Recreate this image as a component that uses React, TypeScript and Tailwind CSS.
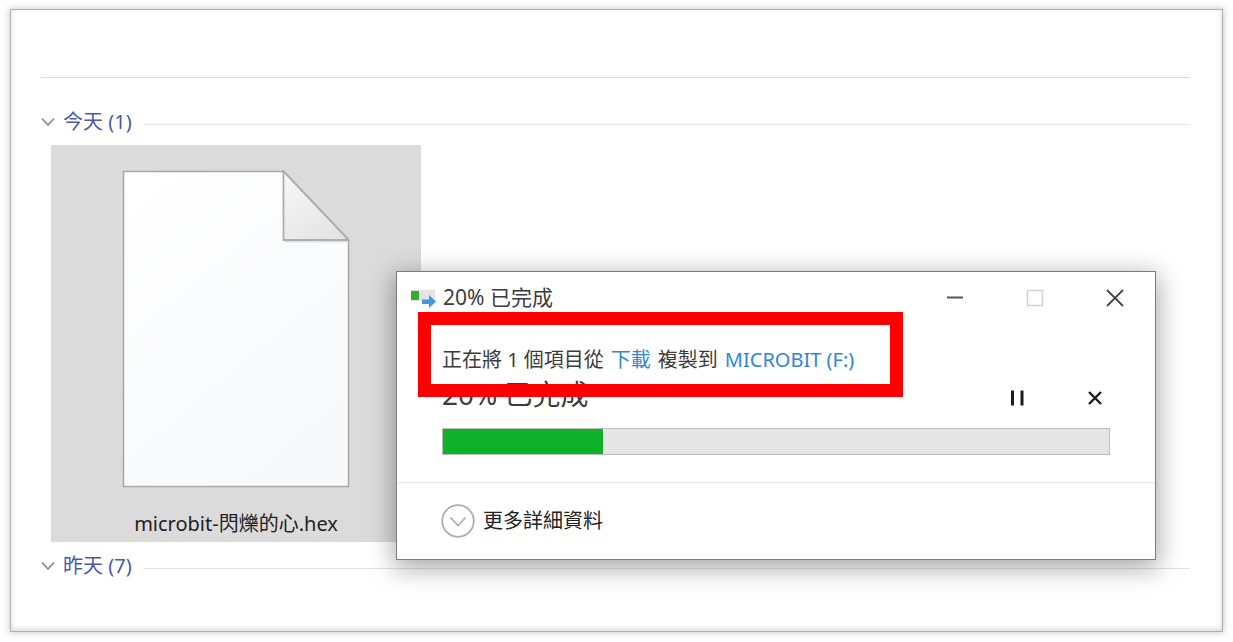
import { useState } from "react";

const ChevronDown = () => (
  <svg width="14" height="10" viewBox="0 0 14 10" fill="none" stroke="#8a8a8a" strokeWidth="1.8">
    <path d="M1 1.5 7 8l6-6.5" />
  </svg>
);

const GroupHeader = ({ label, count }: { label: string; count: number }) => {
  return (
    <div className="flex items-center">
      <button type="button" className="flex items-center gap-2 text-xl leading-6 text-[#4a5ba8]">
        <ChevronDown />
        <span>
          {label} ({count})
        </span>
      </button>
      <div className="mt-1 ml-3 h-px flex-1 bg-[#e4e4e4]" />
    </div>
  );
};

const FileIcon = () => (
  <svg width="228" height="320" viewBox="0 0 228 320">
    <defs>
      <linearGradient id="page" x1="0" y1="0" x2="0.6" y2="1">
        <stop offset="0" stopColor="#ffffff" />
        <stop offset="1" stopColor="#f6f8fa" />
      </linearGradient>
      <linearGradient id="fold" x1="0" y1="0" x2="0.7" y2="1">
        <stop offset="0" stopColor="#f8f8f8" />
        <stop offset="1" stopColor="#e4e4e4" />
      </linearGradient>
    </defs>
    <path d="M1.5 1.5H162l64.5 68V316.5H1.5Z" fill="#ffffff" stroke="#a9a9a9" strokeWidth="1.6" />
    <path d="M4 4H160V72h64V314H4Z" fill="url(#page)" />
    <path d="M163 71.5h62" stroke="#dfe0e2" strokeWidth="2" />
    <path d="M161.5 1.5v68.5h65Z" fill="url(#fold)" stroke="#adadad" strokeWidth="1.8" />
  </svg>
);

const CopyIcon = () => (
  <svg width="27" height="20" viewBox="0 0 27 20">
    <rect x="1" y="2" width="24" height="11" fill="#e6e3e6" />
    <rect x="1" y="3" width="8" height="9" fill="#35ad35" />
    <path d="M12 11.5h7V7l7 6.5-7 6.5v-4h-7Z" fill="#3f96e4" />
  </svg>
);

const CopyDialog = () => {
  const [paused, setPaused] = useState(false);

  return (
    <section
      aria-label="20% 已完成"
      className="absolute top-[261px] right-[66px] left-[385px] border border-[#7d7d7d] bg-white text-[#3c3c3c] shadow-[0_6px_24px_2px_rgba(0,0,0,0.35)]"
    >
      <header className="flex h-[52px] items-center pl-[13px]">
        <CopyIcon />
        <h1 className="ml-[6px] flex-1 text-[21px]">20% 已完成</h1>
        <button type="button" aria-label="最小化" className="flex h-full w-20 items-center justify-center">
          <svg width="18" height="18" stroke="#555" strokeWidth="2">
            <path d="M1 8.5h16" />
          </svg>
        </button>
        <button type="button" aria-label="最大化" disabled className="flex h-full w-20 items-center justify-center">
          <svg width="18" height="18" fill="none" stroke="#d2d2d2" strokeWidth="1.5">
            <path d="M1.5 1.5h15v15h-15Z" />
          </svg>
        </button>
        <button type="button" aria-label="關閉" className="flex h-full w-20 items-center justify-center">
          <svg width="18" height="18" fill="none" stroke="#444" strokeWidth="1.8">
            <path d="m1 1 16 16M17 1 1 17" />
          </svg>
        </button>
      </header>

      <div className="px-[45px] pt-[22px] pb-[27px]">
        <p className="flex gap-[7px] text-xl">
          <span>正在將 1 個項目從</span>
          <a href="#downloads" className="text-[#2f86dc]">
            下載
          </a>
          <span>複製到</span>
          <a href="#microbit" className="text-[#2f86dc]">
            MICROBIT (F:)
          </a>
        </p>
        <div className="mt-1 flex h-10 items-center gap-12">
          <p className="flex-1 pb-2 text-[28px] leading-8">20% 已完成</p>
          <button
            type="button"
            aria-label={paused ? "繼續" : "暫停"}
            onClick={() => setPaused(!paused)}
            className="flex h-8 w-[30px] items-center justify-center"
          >
            <svg width="14" height="16" fill="#1c1c1c">
              <path d="M1 .5h3v15H1ZM10.500 .5h3v15h-3Z" />
            </svg>
          </button>
          <button type="button" aria-label="取消" className="flex h-8 w-[30px] items-center justify-center">
            <svg width="14" height="14" fill="none" stroke="#1c1c1c" strokeWidth="2.4">
              <path d="m1 1 12 12M13 1 1 13" />
            </svg>
          </button>
        </div>
        <div
          role="progressbar"
          aria-valuenow={20}
          className="mt-[10px] h-[27px] border border-[#bcbcbc] bg-[#e6e6e6]"
        >
          <div className="h-full w-[24%] bg-[#0fb12b]" />
        </div>
      </div>

      <footer className="border-t border-[#e8e8e8] px-11 py-5">
        <button type="button" className="flex items-center gap-2 text-xl text-[#222]">
          <svg width="34" height="36" viewBox="0 0 34 36" fill="none" stroke="#adadad" strokeWidth="1.8">
            <circle cx="17" cy="18" r="15.8" />
            <path d="m9.5 14.5 7.5 8 7.5-8" />
          </svg>
          更多詳細資料
        </button>
      </footer>

      <div className="pointer-events-none absolute top-10 left-[21px] h-[85px] w-[485px] border-[13px] border-[#ff0000]" />
    </section>
  );
};

const App = () => {
  return (
    <div className="flex min-h-screen bg-[#fefefe] px-[10px] pt-[9px] pb-[10px] font-['Noto_Sans','Noto_Sans_CJK_TC',sans-serif]">
      <main className="relative flex-1 border border-[#b0b0b0] bg-white pt-[67px] pr-8 pl-[30px] shadow-[0_0_6px_1px_rgba(0,0,0,0.18),inset_0_-2px_5px_rgba(0,0,0,0.15)]">
        <div className="h-px bg-[#dcdcdc]" />
        <div className="pt-8 pb-[11px]">
          <GroupHeader label="今天" count={1} />
        </div>
        <figure className="ml-[10px] flex w-[370px] flex-col items-center bg-[#dbdbdb] pt-[25px] pb-1">
          <FileIcon />
          <figcaption className="mt-5 text-xl text-[#222]">microbit-閃爍的心.hex</figcaption>
        </figure>
        <div className="pt-3">
          <GroupHeader label="昨天" count={7} />
        </div>
        <CopyDialog />
      </main>
    </div>
  );
};

export default App;
